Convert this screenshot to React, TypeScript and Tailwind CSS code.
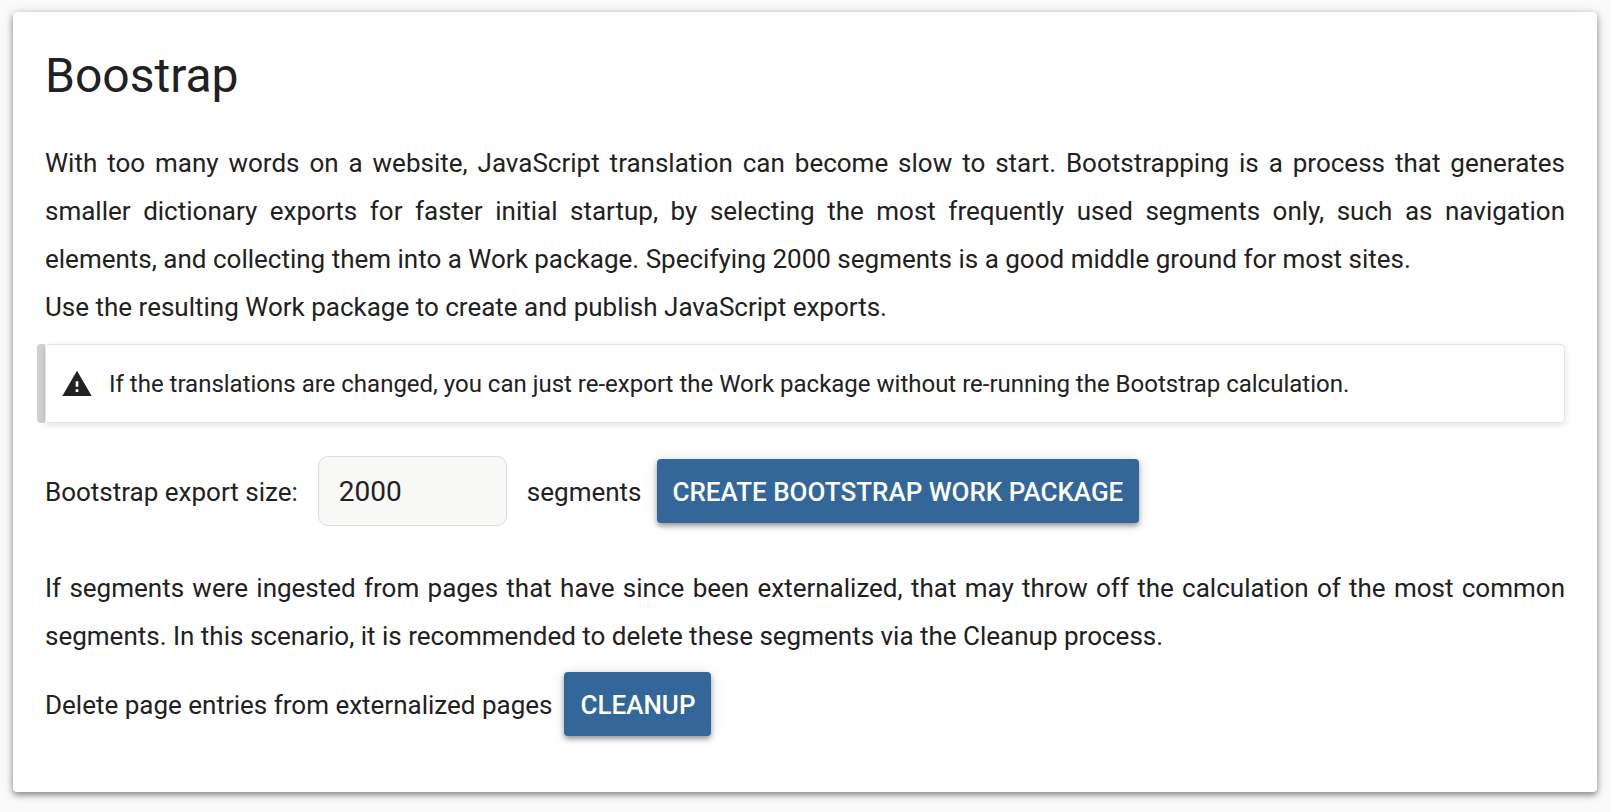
import { useState } from "react";

const PrimaryButton: React.FC<{ children: React.ReactNode }> = ({
  children,
}) => (
  <button
    type="button"
    className="h-16 rounded-sm bg-[#336699] px-4 pt-0.5 text-[26px] font-medium uppercase text-white shadow-[0_3px_5px_rgba(0,0,0,0.35),0_1px_14px_rgba(0,0,0,0.12)]"
  >
    {children}
  </button>
);

const WarningNote: React.FC<{ children: React.ReactNode }> = ({ children }) => (
  <div className="-ml-2 flex h-[79px]">
    <div className="w-2 rounded-l-sm bg-[#d0d0d0]" />
    <div className="flex grow items-center rounded-sm border border-[#e4e4e4] pl-[15px] shadow-[0_2px_6px_rgba(0,0,0,0.12)]">
      <svg viewBox="0 0 24 24" className="mr-4 size-8" fill="currentColor">
        <path d="M1 21h22L12 2 1 21zm12-3h-2v-2h2v2zm0-4h-2v-4h2v4z" />
      </svg>
      <p className="text-2xl">{children}</p>
    </div>
  </div>
);

export default function App() {
  const [size, setSize] = useState("2000");

  return (
    <div className="min-h-screen bg-[#fafafa] py-3 pr-[14px] pl-[13px] font-[Roboto,sans-serif] text-[26px] leading-12 text-[#212121]">
      <main className="rounded-sm bg-white px-8 pt-8 pb-14 shadow-[0_3px_6px_rgba(0,0,0,0.4),0_1px_12px_rgba(0,0,0,0.14)]">
        <h1 className="mb-[31px] text-5xl leading-16">Boostrap</h1>
        <p className="text-justify">
          With too many words on a website, JavaScript translation can become
          slow to start. Bootstrapping is a process that generates smaller
          dictionary exports for faster initial startup, by selecting the most
          frequently used segments only, such as navigation elements, and
          collecting them into a Work package. Specifying 2000 segments is a
          good middle ground for most sites.
          <br />
          Use the resulting Work package to create and publish JavaScript
          exports.
        </p>
        <div className="mt-[13px]">
          <WarningNote>
            If the translations are changed, you can just re-export the Work
            package without re-running the Bootstrap calculation.
          </WarningNote>
        </div>
        <div className="mt-[33px] flex items-center">
          <label htmlFor="export-size" className="pt-0.5">
            Bootstrap export size:
          </label>
          <input
            id="export-size"
            type="text"
            value={size}
            onChange={(e) => setSize(e.target.value)}
            className="mr-5 ml-5 h-[70px] w-[189px] rounded-[10px] border border-[#dddddd] bg-[#f8f8f6] px-5 text-[28px]"
          />
          <span className="mr-[15px] pt-0.5">segments</span>
          <PrimaryButton>Create Bootstrap Work Package</PrimaryButton>
        </div>
        <p className="mt-[38px] text-justify">
          If segments were ingested from pages that have since been
          externalized, that may throw off the calculation of the most common
          segments. In this scenario, it is recommended to delete these segments
          via the Cleanup process.
        </p>
        <div className="mt-3 flex items-center gap-3">
          <span className="pt-0.5">
            Delete page entries from externalized pages
          </span>
          <PrimaryButton>Cleanup</PrimaryButton>
        </div>
      </main>
    </div>
  );
}
